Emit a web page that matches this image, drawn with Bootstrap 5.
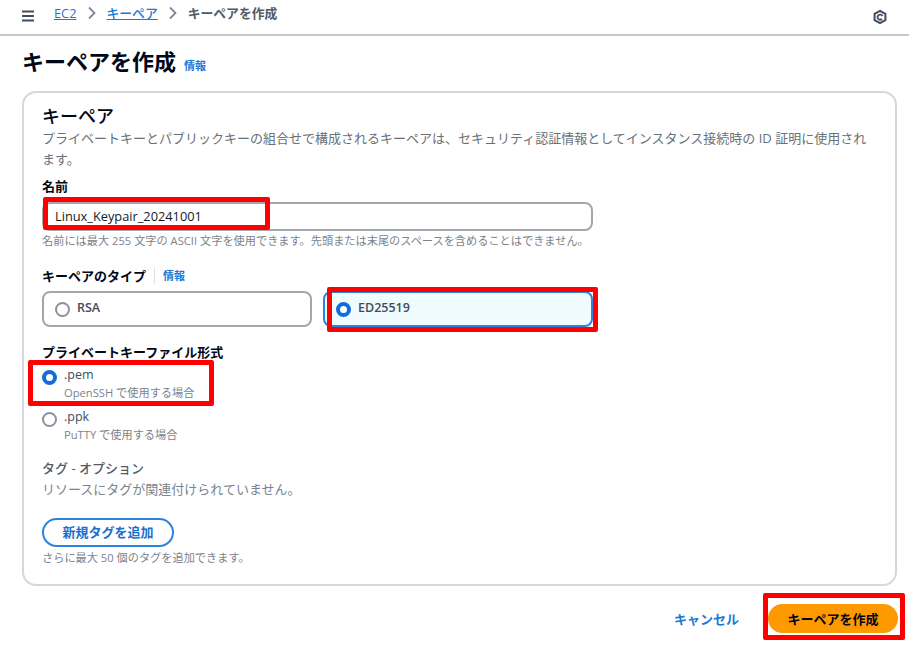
<!DOCTYPE html>
<html lang="ja">
<head>
<meta charset="utf-8">
<title>キーペアを作成</title>
<link href="https://cdn.jsdelivr.net/npm/bootstrap@5.3.0/dist/css/bootstrap.min.css" rel="stylesheet">
<style>
html,body{height:100%;}
body{position:relative;width:909px;height:660px;overflow:hidden;background:#fff;color:#16191f;font-family:"Open Sans","Noto Sans CJK JP",sans-serif;font-size:13px;line-height:16px;}
.topbar{height:36px;border-bottom:2px solid #c6c6cd;padding:0 21px 8px;color:#414d5c;}
.burger{margin-right:19px;margin-top:5px;}
.hex{margin-top:7px;}
.crumb{color:#1a78d6;text-decoration:underline;font-size:12.8px;font-weight:500;}
.crumb-cur{color:#545b64;font-size:12.8px;font-weight:600;}
.crumb-sep{margin:0 10px;display:block;}
.page-head{padding:11px 22px 0;height:55px;}
.page-ttl{font-size:22px;line-height:28px;font-weight:700;color:#000716;margin:0;}
.info-lnk{color:#1a78d6;font-size:11px;font-weight:600;text-decoration:none;}
.panel{margin:0 12px 0 22px;height:495px;border:2px solid #d5d7dc;border-radius:14px;padding:11px 18px 0;}
.panel-ttl{font-size:18px;line-height:24px;font-weight:500;color:#000716;margin:0;}
.desc{color:#687078;font-size:13px;line-height:21px;width:830px;margin:0;}
.fld-lbl{font-size:13px;line-height:16px;font-weight:700;color:#000716;}
.txt-inp{width:551px;height:29px;border:2px solid #a3a6ab;border-radius:8px;padding:0 11px;font-size:12.8px;line-height:25px;font-weight:500;color:#16191f;margin-top:8px;}
.hint{color:#7a838e;font-size:11.2px;line-height:14px;}
.tile{width:270px;height:36px;border:2px solid #a3a6ab;border-radius:8px;padding:8px 11px;gap:7px;font-size:12.5px;line-height:14px;font-weight:600;color:#414d5c;}
.tile-on{border-color:#2b85e0;background:#f0fbff;margin-left:11px;}
.rad{flex:none;display:block;width:15px;height:15px;border:2px solid #8a929c;border-radius:50%;background:#fff;}
.rad-on{border:4.5px solid #0f6fd8;}
.tile .rad{margin-top:1px;}
.opt{gap:7px;}
.opt-name{font-size:12.5px;line-height:16px;font-weight:500;color:#414d5c;}
.opt-sub{font-size:11.2px;line-height:16px;margin-top:2px;color:#7a838e;}
.tag-ttl{font-size:13px;line-height:16px;font-weight:500;color:#545b64;}
.tag-none{font-size:13px;line-height:16px;color:#7a838e;}
.pill-add{display:block;width:132px;height:29px;border:2px solid #2b85e0;border-radius:15px;background:#fff;color:#1a6fcc;font-size:13px;font-weight:700;line-height:25px;padding:0;text-align:center;}
.foot{padding:0 11px 0 0;gap:29px;margin-top:18px;}
.cancel-lnk{color:#1a78d6;font-size:13px;font-weight:700;text-decoration:none;}
.go-btn{width:130px;height:29px;border:0;border-radius:15px;background:#ff9900;color:#000716;font-size:13px;font-weight:700;padding:0;}
.redbox{position:absolute;border:5px solid #ff0000;border-radius:2px;pointer-events:none;}
.gap-name{margin-top:8px;}
.gap-hint{margin-top:3px;}
.gap-type{margin-top:19px;}
.gap-tiles{margin-top:7px;}
.gap-key{margin-top:17px;}
.gap-pem{margin-top:7px;}
.gap-ppk{margin-top:8px;}
.gap-rad{margin-top:3px;}
.gap-tag{margin-top:17px;}
.gap-none{margin-top:5px;}
.gap-add{margin-top:21px;}
.gap-more{margin-top:4px;}
.gap-info{margin-top:11px;}
</style>
</head>
<body>
<div class="topbar d-flex align-items-center">
  <svg class="burger" width="14" height="12" viewBox="0 0 14 12"><path d="M1 1.500h12M1 6h12M1 10.500h12" stroke="#414d5c" stroke-width="2"/></svg>
  <a class="crumb" href="#">EC2</a>
  <svg class="crumb-sep" width="10" height="14" viewBox="0 0 10 14"><path d="M2 1.500l5.500 5.500-5.500 5.500" fill="none" stroke="#7d8998" stroke-width="1.800"/></svg>
  <a class="crumb" href="#">キーペア</a>
  <svg class="crumb-sep" width="10" height="14" viewBox="0 0 10 14"><path d="M2 1.500l5.500 5.500-5.500 5.500" fill="none" stroke="#7d8998" stroke-width="1.800"/></svg>
  <span class="crumb-cur">キーペアを作成</span>
  <svg class="ms-auto hex" width="16" height="16" viewBox="0 0 16 16"><path d="M8 1.800l5.400 3.100v6.200L8 14.200l-5.400-3.100V4.900z" fill="none" stroke="#414d5c" stroke-width="2"/><path d="M10.500 7A2.600 2.600 0 1 0 10 10" fill="none" stroke="#414d5c" stroke-width="1.800"/></svg>
</div>
<div class="page-head d-flex align-items-start gap-2">
  <h1 class="page-ttl">キーペアを作成</h1>
  <a class="info-lnk gap-info" href="#">情報</a>
</div>
<div class="panel">
  <h2 class="panel-ttl">キーペア</h2>
  <p class="desc">プライベートキーとパブリックキーの組合せで構成されるキーペアは、セキュリティ認証情報としてインスタンス接続時の ID 証明に使用されます。</p>
  <div class="fld-lbl gap-name">名前</div>
  <div class="txt-inp">Linux_Keypair_20241001</div>
  <div class="hint gap-hint">名前には最大 255 文字の ASCII 文字を使用できます。先頭または末尾のスペースを含めることはできません。</div>
  <div class="d-flex align-items-center gap-2 fld-lbl gap-type">キーペアのタイプ <span class="border-start ps-2"><a class="info-lnk" href="#">情報</a></span></div>
  <div class="d-flex gap-tiles">
    <div class="tile d-flex align-items-start"><span class="rad"></span><span>RSA</span></div>
    <div class="tile tile-on d-flex align-items-start"><span class="rad rad-on"></span><span>ED25519</span></div>
  </div>
  <div class="fld-lbl gap-key">プライベートキーファイル形式</div>
  <div class="opt d-flex gap-pem"><span class="rad rad-on gap-rad"></span><div><div class="opt-name">.pem</div><div class="opt-sub">OpenSSH で使用する場合</div></div></div>
  <div class="opt d-flex gap-ppk"><span class="rad gap-rad"></span><div><div class="opt-name">.ppk</div><div class="opt-sub">PuTTY で使用する場合</div></div></div>
  <div class="tag-ttl gap-tag">タグ - オプション</div>
  <div class="tag-none gap-none">リソースにタグが関連付けられていません。</div>
  <button class="pill-add gap-add" type="button">新規タグを追加</button>
  <div class="hint gap-more">さらに最大 50 個のタグを追加できます。</div>
</div>
<div class="foot d-flex justify-content-end align-items-center">
  <a class="cancel-lnk" href="#">キャンセル</a>
  <button class="go-btn" type="button">キーペアを作成</button>
</div>
<div class="redbox" style="left:43px;top:197px;width:227px;height:33px"></div>
<div class="redbox" style="left:327px;top:287px;width:271px;height:45px"></div>
<div class="redbox" style="left:28px;top:360px;width:186px;height:46px"></div>
<div class="redbox" style="left:763px;top:593px;width:142px;height:47px"></div>
<script src="https://cdn.jsdelivr.net/npm/bootstrap@5.3.0/dist/js/bootstrap.bundle.min.js"></script>
</body>
</html>
